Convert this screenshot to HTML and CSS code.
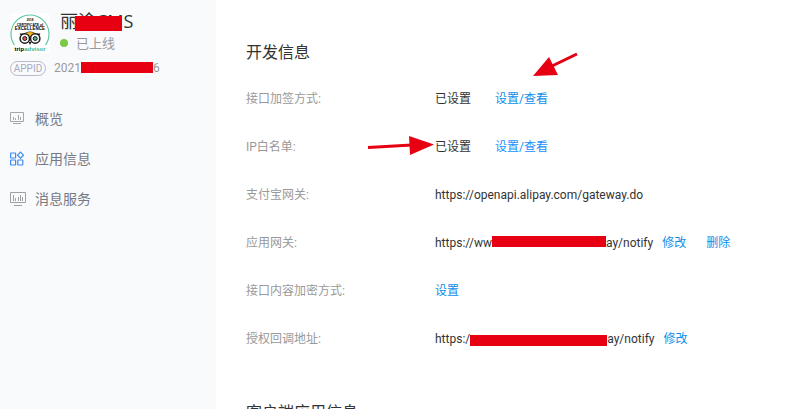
FILE: index.html
```html
<!DOCTYPE html>
<html lang="zh-CN">
<head>
  <meta charset="UTF-8">
  <title>应用信息</title>
  <meta name="viewport" content="width=device-width, initial-scale=1.0">
  <link rel="stylesheet" href="styles.css">
</head>
<body>

  <div class="page">
    <aside class="sidebar">
      <div class="app">
        <svg class="logo" viewBox="0 0 40 40" role="img" aria-label="tripadvisor">
          <rect width="40" height="40" rx="4" fill="#fff"/>
          <path d="M4.500 32A19 19 0 1 1 35.500 32" fill="none" stroke="#5cc7a2" stroke-width="1.200"/>
          <text x="20" y="8" font-size="3" font-weight="700" text-anchor="middle">2018</text>
          <text x="20" y="12.500" font-size="3.400" font-weight="700" text-anchor="middle">CERTIFICATE of</text>
          <text x="20" y="16.800" font-size="4.500" font-weight="700" text-anchor="middle">EXCELLENCE</text>
          <path d="M9.500 20.500h4.500Q20 16.500 26 20.500h4.500l-2 3h-17z" fill="#1a1a1a"/>
          <path d="M14 20.500Q20 17.500 26 20.500L20 26z" fill="#f5b921"/>
          <circle cx="14.800" cy="25.500" r="4.700" fill="#fff" stroke="#1a1a1a" stroke-width="1.500"/>
          <circle cx="25.200" cy="25.500" r="4.700" fill="#fff" stroke="#1a1a1a" stroke-width="1.500"/>
          <circle cx="14.800" cy="25.500" r="2" fill="#e05a4e" stroke="#1a1a1a"/>
          <circle cx="25.200" cy="25.500" r="2" fill="#4fae8a" stroke="#1a1a1a"/>
          <path d="M18.500 29h3L20 32z" fill="#1a1a1a"/>
          <text x="20" y="38" font-size="6" font-weight="700" text-anchor="middle">trip<tspan fill="#3db58b">advisor</tspan></text>
        </svg>
        <div class="app-text">
          <div class="app-name">丽途CMS<span class="mask name-mask"></span></div>
          <div class="status"><span class="dot"></span>已上线</div>
        </div>
      </div>

      <div class="appid">
        <span class="tag">APPID</span>
        <span>2021<span class="mask id-mask"></span>6</span>
      </div>

      <nav class="menu">
        <a href="#">
          <svg class="icon" viewBox="0 0 16 16" fill="none" stroke="#a5a7ad">
            <path d="M0.500 1.500h13v9h-13z"/>
            <path d="M3.500 6v3M5.500 7v2M8.500 4v5M10.500 6v3M3 12.500h8"/>
          </svg>
          概览
        </a>
        <a href="#">
          <svg class="icon" viewBox="0 0 16 16" fill="none" stroke="#3c8af0" stroke-width="1.200">
            <rect x="0.600" y="2" width="5" height="5" rx="0.500"/>
            <rect x="0.600" y="9" width="5" height="5" rx="0.500"/>
            <rect x="7.800" y="9" width="5" height="5" rx="0.500"/>
            <path d="M10.500 1.200L13.500 4.200L10.500 7.200L7.500 4.200z"/>
          </svg>
          应用信息
        </a>
        <a href="#">
          <svg class="icon" viewBox="0 0 16 16" fill="none" stroke="#a0a0a0">
            <path d="M0.500 1.500h15v10h-15z"/>
            <path d="M3.500 4v6M5.500 7v3M8.500 6v4M10.500 4v6M12.500 6v4M4 14.500h8"/>
          </svg>
          消息服务
        </a>
      </nav>
    </aside>

    <main class="content">
      <h2>开发信息</h2>
      <dl class="info">
        <dt>接口加签方式:</dt>
        <dd>
          已设置
          <a class="view" href="#">设置/查看</a>
          <svg class="arrow arrow-down" viewBox="0 0 46 24">
            <path d="M45 1L18 14" stroke="#e60012" stroke-width="3"/>
            <path d="M1 23L17 4L26 22z" fill="#e60012"/>
          </svg>
        </dd>

        <dt>IP白名单:</dt>
        <dd>
          已设置
          <a class="view bright" href="#">设置/查看</a>
          <svg class="arrow arrow-right" viewBox="0 0 66 20">
            <path d="M0 12.500L44 10" stroke="#e60012" stroke-width="3"/>
            <path d="M41 1L66 9.500L42 20z" fill="#e60012"/>
          </svg>
        </dd>

        <dt>支付宝网关:</dt>
        <dd>https://openapi.alipay.com/gateway.do</dd>

        <dt>应用网关:</dt>
        <dd>
          <span>https://ww<span class="mask gateway-mask"></span>ay/notify</span>
          <a class="edit" href="#">修改</a>
          <a class="remove" href="#">删除</a>
        </dd>

        <dt>接口内容加密方式:</dt>
        <dd><a href="#">设置</a></dd>

        <dt>授权回调地址:</dt>
        <dd>
          <span>https:/<span class="mask callback-mask"></span>ay/notify</span>
          <a class="edit" href="#">修改</a>
        </dd>
      </dl>

      <h2>客户端应用信息</h2>
    </main>
  </div>

</body>
</html>
```
FILE: styles.css
```css
:root {
  --side-bg: #f9fafc;
  --text: #333;
  --label: #999;
  --link: #108ee9;
  --red: #e60012;
}

* {
  box-sizing: border-box;
}

body {
  margin: 0;
  font-family: "Open Sans", "Noto Sans CJK SC", sans-serif;
  font-size: 12px;
  line-height: 18px;
  color: var(--text);
  background: #fff;
}

a {
  color: var(--link);
  text-decoration: none;
}

.page {
  display: flex;
  height: 100vh;
  overflow: hidden;
}

/* sidebar */
.sidebar {
  flex: 0 0 216px;
  padding: 10px;
  background: var(--side-bg);
}

.app {
  display: flex;
  gap: 10px;
}

.logo {
  width: 40px;
  height: 40px;
  margin-top: 3px;
  font-family: "Liberation Sans", sans-serif;
}

.app-name {
  position: relative;
  font-size: 18px;
  line-height: 22px;
}

.status {
  display: flex;
  align-items: center;
  gap: 8px;
  font-size: 13px;
  line-height: 22px;
  color: var(--label);
}

.dot {
  width: 8px;
  height: 8px;
  border-radius: 50%;
  background: #7ac943;
}

.appid {
  display: flex;
  align-items: center;
  gap: 8px;
  height: 20px;
  margin-top: 4px;
  font-family: Roboto, sans-serif;
  color: var(--label);
}

.tag {
  width: 36px;
  border: 1px solid #bbb8ca;
  border-radius: 8px;
  font-size: 10px;
  line-height: 13px;
  text-align: center;
  color: #a9a9bb;
}

.menu {
  margin-top: 21px;
}

.menu a {
  display: flex;
  align-items: center;
  gap: 9px;
  height: 40px;
  font-size: 14px;
  color: #777985;
}

.icon {
  width: 16px;
  height: 16px;
}

/* red bars over private text */
.mask {
  display: inline-block;
  height: 11px;
  background: var(--red);
  vertical-align: -1px;
}

.name-mask {
  position: absolute;
  left: 15px;
  top: 6px;
  width: 47px;
  height: 15px;
}

.id-mask {
  width: 72px;
}

.gateway-mask {
  width: 114px;
  vertical-align: 0;
}

.callback-mask {
  width: 137px;
  vertical-align: -3px;
}

/* content */
.content {
  flex: 1;
  padding: 40px 30px 0;
}

h2 {
  margin: 0 0 11px;
  font-size: 16px;
  font-weight: 400;
  line-height: 24px;
}

.info {
  display: grid;
  grid-template-columns: 189px 1fr;
  grid-auto-rows: 48px;
  align-items: center;
  margin: 0 0 37px;
  font-family: Roboto, "Noto Sans CJK SC", sans-serif;
}

.info dt {
  color: var(--label);
}

.info dd {
  position: relative;
  display: flex;
  margin: 0;
  white-space: nowrap;
}

.view {
  margin-left: 24px;
}

.bright {
  color: #1890ff;
}

.edit {
  margin-left: 9px;
}

.remove {
  margin-left: 20px;
}

.arrow {
  position: absolute;
}

.arrow-down {
  left: 97px;
  top: -37px;
  width: 46px;
  height: 24px;
}

.arrow-right {
  left: -67px;
  top: -3px;
  width: 66px;
  height: 20px;
}
```
